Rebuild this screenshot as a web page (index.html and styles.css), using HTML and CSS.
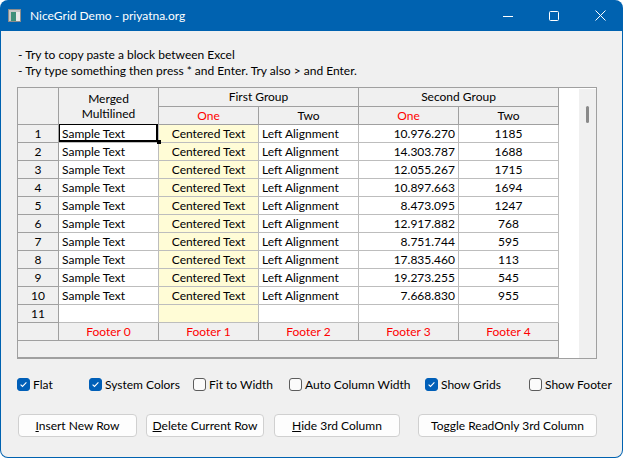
FILE: index.html
```html
<!DOCTYPE html>
<html>
<head>
<meta charset="utf-8">
<link rel="stylesheet" href="styles.css">
</head>
<body>
<div class="window">
  <div class="titlebar">
    <svg class="app-icon" width="13" height="13" viewBox="0 0 13 13">
      <rect x="0.5" y="0.5" width="12" height="12" fill="#f2f2f2" stroke="#8c8c8c"/>
      <rect x="1" y="1" width="11" height="2" fill="#c8c8c8"/>
      <rect x="1" y="3" width="2" height="9" fill="#c8c8c8"/>
      <rect x="3" y="3" width="5" height="9" fill="#3e8f7a"/>
      <rect x="8" y="3" width="4" height="9" fill="#e9e9e9"/>
    </svg>
    <span class="title">NiceGrid Demo - priyatna.org</span>
    <div class="controls">
      <span class="ctl"><svg width="10" height="10" viewBox="0 0 10 10"><path d="M0 5.5H10" stroke="#fff" stroke-width="1"/></svg></span>
      <span class="ctl"><svg width="10" height="10" viewBox="0 0 10 10"><rect x="0.5" y="0.5" width="9" height="9" rx="1" fill="none" stroke="#fff" stroke-width="1"/></svg></span>
      <span class="ctl"><svg width="11" height="11" viewBox="0 0 11 11"><path d="M0.5 0.5L10.5 10.5M10.5 0.5L0.5 10.5" stroke="#fff" stroke-width="1"/></svg></span>
    </div>
  </div>
  <div class="client">
    <p class="hint">- Try to copy paste a block between Excel</p>
    <p class="hint">- Try type something then press * and Enter. Try also &gt; and Enter.</p>
    <div class="grid">
      <div class="cells">
        <div class="hd corner"></div>
        <div class="hd merged"><span class="ml">Merged</span><span class="ml">Multilined</span></div>
        <div class="hd group">First Group</div>
        <div class="hd group">Second Group</div>
        <div class="hd red">One</div>
        <div class="hd">Two</div>
        <div class="hd red">One</div>
        <div class="hd">Two</div>

        <div class="rn">1</div><div class="c l focus">Sample Text</div><div class="c m y">Centered Text</div><div class="c l">Left Alignment</div><div class="c r">10.976.270</div><div class="c m">1185</div>
        <div class="rn">2</div><div class="c l">Sample Text</div><div class="c m y">Centered Text</div><div class="c l">Left Alignment</div><div class="c r">14.303.787</div><div class="c m">1688</div>
        <div class="rn">3</div><div class="c l">Sample Text</div><div class="c m y">Centered Text</div><div class="c l">Left Alignment</div><div class="c r">12.055.267</div><div class="c m">1715</div>
        <div class="rn">4</div><div class="c l">Sample Text</div><div class="c m y">Centered Text</div><div class="c l">Left Alignment</div><div class="c r">10.897.663</div><div class="c m">1694</div>
        <div class="rn">5</div><div class="c l">Sample Text</div><div class="c m y">Centered Text</div><div class="c l">Left Alignment</div><div class="c r">8.473.095</div><div class="c m">1247</div>
        <div class="rn">6</div><div class="c l">Sample Text</div><div class="c m y">Centered Text</div><div class="c l">Left Alignment</div><div class="c r">12.917.882</div><div class="c m">768</div>
        <div class="rn">7</div><div class="c l">Sample Text</div><div class="c m y">Centered Text</div><div class="c l">Left Alignment</div><div class="c r">8.751.744</div><div class="c m">595</div>
        <div class="rn">8</div><div class="c l">Sample Text</div><div class="c m y">Centered Text</div><div class="c l">Left Alignment</div><div class="c r">17.835.460</div><div class="c m">113</div>
        <div class="rn">9</div><div class="c l">Sample Text</div><div class="c m y">Centered Text</div><div class="c l">Left Alignment</div><div class="c r">19.273.255</div><div class="c m">545</div>
        <div class="rn">10</div><div class="c l">Sample Text</div><div class="c m y">Centered Text</div><div class="c l">Left Alignment</div><div class="c r">7.668.830</div><div class="c m">955</div>
        <div class="rn">11</div><div class="c l"></div><div class="c m y"></div><div class="c l"></div><div class="c r"></div><div class="c m"></div>

        <div class="ft"></div><div class="ft red">Footer 0</div><div class="ft red">Footer 1</div><div class="ft red">Footer 2</div><div class="ft red">Footer 3</div><div class="ft red">Footer 4</div>
        <div class="strip"></div>
      </div>
      <div class="gap"></div>
      <div class="vscroll"><div class="thumb"></div></div>
    </div>

    <div class="options">
      <label class="opt w1"><span class="cb on"><svg width="11" height="11" viewBox="0 0 11 11"><path d="M2.6 5.6L4.5 7.5L8.4 3.4" fill="none" stroke="#fff" stroke-width="1.1"/></svg></span>Flat</label>
      <label class="opt w2"><span class="cb on"><svg width="11" height="11" viewBox="0 0 11 11"><path d="M2.6 5.6L4.5 7.5L8.4 3.4" fill="none" stroke="#fff" stroke-width="1.1"/></svg></span>System Colors</label>
      <label class="opt w3"><span class="cb"></span>Fit to Width</label>
      <label class="opt w4"><span class="cb"></span>Auto Column Width</label>
      <label class="opt w5"><span class="cb on"><svg width="11" height="11" viewBox="0 0 11 11"><path d="M2.6 5.6L4.5 7.5L8.4 3.4" fill="none" stroke="#fff" stroke-width="1.1"/></svg></span>Show Grids</label>
      <label class="opt"><span class="cb"></span>Show Footer</label>
    </div>

    <div class="buttons">
      <button class="btn b1"><u>I</u>nsert New Row</button>
      <button class="btn b2"><u>D</u>elete Current Row</button>
      <button class="btn b3"><u>H</u>ide 3rd Column</button>
      <button class="btn b4">Toggle ReadOnly 3rd Column</button>
    </div>
  </div>
</div>
</body>
</html>
```
FILE: styles.css
```css
html, body {
  margin: 0;
  padding: 0;
  background: #ffffff;
}
body {
  font-family: Lato, "Noto Sans", sans-serif;
  font-size: 12px;
  color: #000;
}
.window {
  width: 623px;
  height: 458px;
  background: #0062b0;
  border-radius: 8px;
  display: flex;
  flex-direction: column;
  overflow: hidden;
}
.titlebar {
  height: 31px;
  flex: none;
  display: flex;
  align-items: center;
  color: #fff;
}
.app-icon {
  margin-left: 8px;
  flex: none;
}
.title {
  margin-left: 9px;
  font-size: 12px;
}
.controls {
  margin-left: auto;
  display: flex;
}
.ctl {
  width: 46px;
  height: 31px;
  display: flex;
  align-items: center;
  justify-content: center;
}
.client {
  flex: 1;
  margin: 0 1px 1px 1px;
  background: #f0f0f0;
  border-radius: 0 0 7px 7px;
  padding: 16px 0 0 16px;
}
.hint {
  margin: 0 0 0 1px;
  line-height: 16px;
}
.grid {
  margin-top: 8px;
  width: 580px;
  height: 272px;
  box-sizing: border-box;
  border: 1px solid #a0a0a0;
  background: #fff;
  display: flex;
}
.cells {
  display: grid;
  grid-template-columns: 41px repeat(5, 100px);
  grid-template-rows: 19px repeat(13, 18px) 17px;
  flex: none;
  align-self: flex-start;
}
.cells > div {
  box-sizing: border-box;
  border-right: 1px solid #a0a0a0;
  border-bottom: 1px solid #a0a0a0;
  line-height: 17px;
  white-space: nowrap;
  overflow: visible;
}
.hd {
  background: #f0f0f0;
  text-align: center;
}
.corner {
  grid-row: span 2;
}
.cells > .merged {
  grid-row: span 2;
  display: flex;
  flex-direction: column;
  align-items: center;
  padding-top: 3px;
}
.ml {
  display: block;
  height: 15px;
  line-height: 15px;
}
.group {
  grid-column: span 2;
}
.red {
  color: #ff0000;
}
.rn {
  background: #f0f0f0;
  text-align: center;
}
.cells > .c {
  border-right-color: #bdbdbd;
  border-bottom-color: #bdbdbd;
}
.l {
  padding-left: 3px;
}
.m {
  text-align: center;
}
.r {
  text-align: right;
  padding-right: 3px;
}
.y {
  background: #fffcd6;
}
.focus {
  position: relative;
}
.focus::before {
  content: "";
  position: absolute;
  left: 0;
  top: -1px;
  right: 0;
  bottom: 0;
  border-top: 1px solid #000;
  border-left: 1px solid #000;
  border-right: 2px solid #000;
  border-bottom: 2px solid #000;
}
.focus::after {
  content: "";
  position: absolute;
  right: -3px;
  bottom: -2px;
  width: 4px;
  height: 4px;
  background: #000;
  z-index: 2;
}
.ft {
  background: #f0f0f0;
  text-align: center;
}
.strip {
  grid-column: 1 / span 6;
  background: #f0f0f0;
}
.gap {
  width: 20px;
  flex: none;
}
.vscroll {
  width: 17px;
  flex: none;
  margin-top: 1px;
  background: #f0f0f0;
  display: flex;
  flex-direction: column;
}
.thumb {
  margin-top: 17px;
  margin-left: 7px;
  width: 3px;
  height: 17px;
  border-radius: 2px;
  background: #8a8a8a;
}
.options {
  display: flex;
  align-items: center;
  margin-top: 19px;
  height: 13px;
}
.opt {
  display: flex;
  align-items: center;
  gap: 3px;
  flex: none;
}
.w1 { width: 72px; }
.w2 { width: 104px; }
.w3 { width: 96px; }
.w4 { width: 136px; }
.w5 { width: 104px; }
.cb {
  width: 13px;
  height: 13px;
  box-sizing: border-box;
  border: 1px solid #5c5c5c;
  border-radius: 3px;
  background: #fbfbfb;
  display: flex;
  align-items: center;
  justify-content: center;
  flex: none;
}
.cb.on {
  background: #005fb8;
  border-color: #005fb8;
}
.buttons {
  display: flex;
  margin-top: 23px;
}
.btn {
  height: 23px;
  box-sizing: border-box;
  border: 1px solid #d0d0d0;
  border-radius: 4px;
  background: #fdfdfd;
  font-family: inherit;
  font-size: 12px;
  color: #000;
  padding: 0;
}
.b1 { width: 119px; margin-left: 1px; }
.b2 { width: 118px; margin-left: 9px; }
.b3 { width: 126px; margin-left: 10px; }
.b4 { width: 179px; margin-left: 18px; }
```
